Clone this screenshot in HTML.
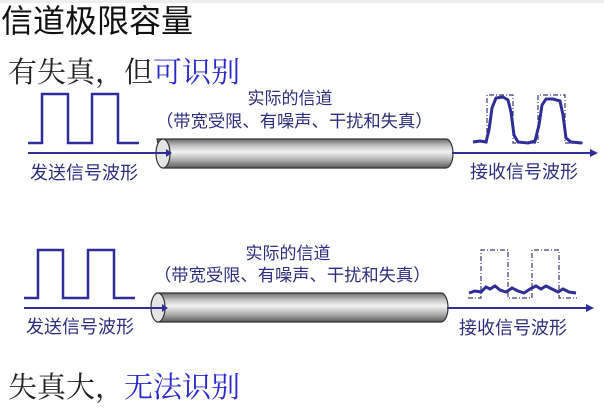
<!DOCTYPE html>
<html><head><meta charset="utf-8"><style>
html,body{margin:0;padding:0;background:#fff;width:604px;height:408px;overflow:hidden}
svg{display:block}
.s{font-family:"Liberation Sans","Noto Sans CJK SC",sans-serif}
.r{font-family:"Liberation Serif","Noto Serif CJK SC",serif}
</style></head><body>
<svg width="604" height="408" viewBox="0 0 604 408" xmlns="http://www.w3.org/2000/svg">
<defs>
<linearGradient id="cg" x1="0" y1="0" x2="0" y2="1">
<stop offset="0" stop-color="#6a6a6a"/><stop offset="0.25" stop-color="#c8c8c8"/>
<stop offset="0.45" stop-color="#f2f2f2"/><stop offset="0.75" stop-color="#a8a8a8"/>
<stop offset="1" stop-color="#5a5a5a"/></linearGradient>
</defs>
<rect x="0" y="0" width="604" height="3" fill="#eee"/>
<text x="1" y="32" class="s" font-size="32" fill="#111">信道极限容量</text>
<text x="8" y="82" class="r" font-size="29" fill="#222">有失真，但<tspan fill="#2a2acc">可识别</tspan></text>

<!-- top diagram -->
<path d="M28 143 H42 V94 H68 V143 H92 V94 H118 V143 H139" fill="none" stroke="#2e2e96" stroke-width="2.5"/>
<path d="M157 139 H446 A7 14.5 0 0 1 446 168 H163 Z" fill="url(#cg)" stroke="#333" stroke-width="1.2"/>
<ellipse cx="163" cy="153.5" rx="7" ry="14.5" fill="#e4e4e4" stroke="#333" stroke-width="1.2"/>
<path d="M28 153 H166 M452 153 H590" stroke="#2e2e96" stroke-width="2"/>
<path d="M166 149 L172 153 L166 157 Z M590 149 L598 153 L590 157 Z" fill="#2e2e96"/>
<text x="290" y="104" class="s" font-size="17" fill="#2e2e7e" text-anchor="middle">实际的信道</text>
<text x="156" y="127" class="s" font-size="17.3" fill="#2e2e7e">（带宽受限、有噪声、干扰和失真）</text>
<text x="30" y="179" class="s" font-size="18" fill="#2e2e7e">发送信号波形</text>
<text x="470" y="178" class="s" font-size="18" fill="#2e2e7e">接收信号波形</text>
<path d="M487 143 V95 H513 V143 H538 V95 H565 V143 H583" fill="none" stroke="#3a3a7a" stroke-width="1.2" stroke-dasharray="5,2,1,2"/>
<path d="M473 142 L480 141 L486 142 L489 130 L492 108 L496 98 L503 97 L508 100 L511 112 L514 135 L518 142 L528 143 L535 141 L539 125 L542 105 L546 99 L553 99 L560 101 L563 115 L566 138 L571 142 L582 143" fill="none" stroke="#2e2e96" stroke-width="3"/>

<!-- bottom diagram -->
<path d="M24 298 H38 V250 H63 V298 H88 V250 H114 V298 H135" fill="none" stroke="#2e2e96" stroke-width="2.5"/>
<path d="M157 293 H441 A7 14.5 0 0 1 441 322 H157 Z" fill="url(#cg)" stroke="#333" stroke-width="1.2"/>
<ellipse cx="158" cy="307.5" rx="7" ry="14.5" fill="#e4e4e4" stroke="#333" stroke-width="1.2"/>
<path d="M24 308 H162 M447 308 H586" stroke="#2e2e96" stroke-width="2"/>
<path d="M162 304 L168 308 L162 312 Z M586 304 L594 308 L586 312 Z" fill="#2e2e96"/>
<text x="288" y="259" class="s" font-size="17" fill="#2e2e7e" text-anchor="middle">实际的信道</text>
<text x="154" y="281" class="s" font-size="17.3" fill="#2e2e7e">（带宽受限、有噪声、干扰和失真）</text>
<text x="26" y="333" class="s" font-size="18" fill="#2e2e7e">发送信号波形</text>
<text x="459" y="334" class="s" font-size="18" fill="#2e2e7e">接收信号波形</text>
<path d="M468 298 H481 V250 H508 V298 H532 V250 H559 V298 H577" fill="none" stroke="#3a3a7a" stroke-width="1.2" stroke-dasharray="5,2,1,2"/>
<path d="M469 293 L475 291 L481 292 L486 287 L490 289 L495 286 L500 290 L506 292 L512 288 L518 291 L524 293 L530 289 L536 286 L541 289 L546 286 L552 289 L558 292 L563 289 L569 292 L576 293" fill="none" stroke="#2e2e96" stroke-width="3"/>

<text x="8" y="397" class="r" font-size="29" fill="#222">失真大，<tspan fill="#2a2acc">无法识别</tspan></text>
</svg>
</body></html>
